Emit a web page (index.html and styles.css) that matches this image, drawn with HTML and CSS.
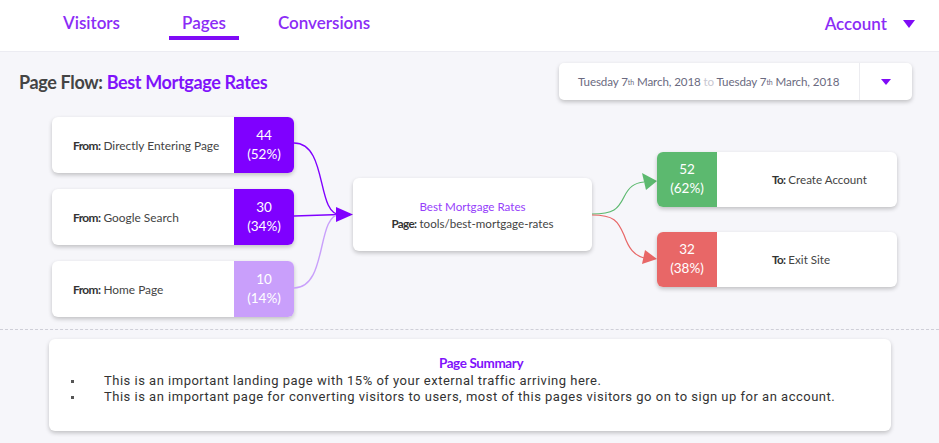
FILE: index.html
```html
<!DOCTYPE html>
<html lang="en">
<head>
<meta charset="utf-8">
<title>Page Flow</title>
<link rel="stylesheet" href="styles.css">
</head>
<body>
<header class="topnav">
  <nav class="tabs">
    <a class="tab">Visitors</a>
    <a class="tab active">Pages</a>
    <a class="tab">Conversions</a>
  </nav>
  <div class="account">Account <span class="caret"></span></div>
</header>
<main class="main">
  <div class="title-row">
    <h1 class="title">Page Flow: <span class="title-accent">Best Mortgage Rates</span></h1>
    <div class="datepicker">
      <div class="date-text">Tuesday 7<sup>th</sup> March, 2018 <span class="to">to</span> Tuesday 7<sup>th</sup> March, 2018</div>
      <div class="date-btn"><span class="caret small"></span></div>
    </div>
  </div>

  <section class="flow">
    <div class="col-left">
      <div class="card src">
        <div class="src-label"><b>From:</b> Directly Entering Page</div>
        <div class="count purple">44<br>(52%)</div>
      </div>
      <div class="card src">
        <div class="src-label"><b>From:</b> Google Search</div>
        <div class="count purple">30<br>(34%)</div>
      </div>
      <div class="card src">
        <div class="src-label"><b>From:</b> Home Page</div>
        <div class="count lilac">10<br>(14%)</div>
      </div>
    </div>

    <svg class="link-in" width="59" height="200" viewBox="0 0 59 200">
      <path d="M0 26 C 34 26, 22 97.5, 46 97.5" fill="none" stroke="#8000ff" stroke-width="1.4"/>
      <path d="M0 99 L 46 97.5" fill="none" stroke="#8000ff" stroke-width="1.4"/>
      <path d="M0 171 C 34 171, 22 97.5, 46 97.5" fill="none" stroke="#c9a0fb" stroke-width="1.4"/>
      <polygon points="42,90 59,97.5 42,105" fill="#8000ff"/>
    </svg>

    <div class="card center">
      <div class="center-name">Best Mortgage Rates</div>
      <div class="center-page"><b>Page:</b> tools/best-mortgage-rates</div>
    </div>

    <svg class="link-out" width="65" height="200" viewBox="0 0 65 200">
      <path d="M0 97 C 22 97, 26 92, 32 80 C 37 70, 42 66, 52 65" fill="none" stroke="#5cb96f" stroke-width="1.2"/>
      <path d="M0 98 C 22 98, 26 104, 32 118 C 37 132, 42 138, 52 141" fill="none" stroke="#e86767" stroke-width="1.2"/>
      <polygon points="50,56 65,64 54,73" fill="#5cb96f"/>
      <polygon points="53,133 65,142 50,147" fill="#e86767"/>
    </svg>

    <div class="col-right">
      <div class="card dest">
        <div class="count green">52<br>(62%)</div>
        <div class="dest-label"><b>To:</b> Create Account</div>
      </div>
      <div class="card dest">
        <div class="count red">32<br>(38%)</div>
        <div class="dest-label"><b>To:</b> Exit Site</div>
      </div>
    </div>
  </section>

  <hr class="divider">

  <section class="card summary">
    <h2 class="summary-title">Page Summary</h2>
    <ul class="summary-list">
      <li>This is an important landing page with 15% of your external traffic arriving here.</li>
      <li>This is an important page for converting visitors to users, most of this pages visitors go on to sign up for an account.</li>
    </ul>
  </section>
</main>
</body>
</html>
```

FILE: styles.css
```css
* { box-sizing: border-box; }
html, body { margin: 0; padding: 0; }
body {
  width: 939px;
  height: 443px;
  overflow: hidden;
  font-family: Lato, "Open Sans", sans-serif;
  background: #f6f6fa;
  color: #444;
}

.topnav {
  height: 52px;
  background: #fff;
  border-bottom: 1px solid #ececf2;
  display: flex;
  align-items: flex-start;
  justify-content: space-between;
  padding: 0 24px 0 50px;
}
.tabs { display: flex; gap: 26px; }
.tab {
  display: block;
  padding: 12px 13px 0;
  height: 40px;
  font-size: 17px;
  font-weight: 600;
  color: #8b2cf6;
  border-bottom: 4px solid transparent;
  line-height: 22px;
}
.tab:first-child { margin-right: 10px; }
.tab.active { border-bottom-color: #7f0bf6; }
.account {
  display: flex;
  align-items: center;
  gap: 16px;
  padding-top: 13px;
  font-size: 17px;
  font-weight: 600;
  color: #8b2cf6;
  line-height: 22px;
}
.caret {
  display: inline-block;
  width: 0; height: 0;
  border-left: 6px solid transparent;
  border-right: 6px solid transparent;
  border-top: 8px solid #7f0bf6;
}
.caret.small {
  border-left-width: 5px;
  border-right-width: 5px;
  border-top-width: 6px;
}

.main { padding: 11px 0 0; }
.title-row {
  display: flex;
  justify-content: space-between;
  align-items: center;
  padding: 0 27px 0 19px;
  height: 37px;
}
.title {
  margin: 0;
  font-size: 18px;
  font-weight: 700;
  letter-spacing: -0.35px;
  color: #444;
}
.title-accent { color: #7f12fb; }

.datepicker {
  width: 353px;
  height: 37px;
  background: #fff;
  border-radius: 5px;
  box-shadow: 0 2px 4px rgba(0,0,0,0.22);
  display: flex;
  align-items: stretch;
}
.date-text {
  flex: 1;
  display: flex;
  align-items: center;
  padding-left: 19px;
  font-size: 11.6px;
  color: #6a6a80;
  letter-spacing: -0.1px;
  white-space: pre;
}
.date-text sup { font-size: 7px; vertical-align: 4px; line-height: 0; }
.date-text .to { color: #c8c8d2; }
.date-btn {
  width: 53px;
  border-left: 1px solid #ececf0;
  display: flex;
  align-items: center;
  justify-content: center;
}

.flow {
  display: flex;
  align-items: center;
  height: 200px;
  margin: 17px 0 0 52px;
}
.card {
  background: #fff;
  border-radius: 6px;
  box-shadow: 0 2px 4px rgba(0,0,0,0.22);
  overflow: hidden;
}
.col-left {
  width: 242px;
  display: flex;
  flex-direction: column;
  gap: 16px;
}
.src {
  height: 56px;
  display: flex;
}
.src-label {
  flex: 1;
  display: flex;
  align-items: center;
  padding-left: 21px;
  font-size: 11.9px;
  color: #444;
  white-space: pre;
}
.src-label b, .dest-label b, .center-page b {
  font-weight: 700;
  letter-spacing: -0.6px;
  color: #333;
}
.count {
  width: 60px;
  display: flex;
  align-items: center;
  justify-content: center;
  text-align: center;
  color: #fff;
  font-size: 13.5px;
  line-height: 19px;
}
.purple { background: #7f00ff; }
.lilac { background: #c99ffb; }
.green { background: #5cb96f; }
.red { background: #e86767; }

.link-in, .link-out { display: block; flex: none; }

.center {
  width: 239px;
  height: 73px;
  margin-top: -5px;
  display: flex;
  flex-direction: column;
  align-items: center;
  justify-content: center;
  gap: 4px;
}
.center-name { color: #9640fb; font-size: 11.6px; }
.center-page { color: #444; font-size: 11.6px; }

.col-right {
  width: 240px;
  display: flex;
  flex-direction: column;
  gap: 25px;
  margin-top: 4px;
}
.dest {
  height: 55px;
  display: flex;
}
.dest-label {
  flex: 1;
  display: flex;
  align-items: center;
  padding-left: 55px;
  font-size: 11.6px;
  color: #444;
  white-space: pre;
}

.divider {
  margin: 12px 0 0;
  border: 0;
  border-top: 1px dashed #cfcfd8;
  height: 0;
}

.summary {
  margin: 9px 48px 0 49px;
  height: 92px;
  padding: 16px 0 0 22px;
}
.summary-title {
  margin: 0 0 2px;
  text-align: center;
  font-size: 13.5px;
  font-weight: 700;
  color: #7f12fb;
  letter-spacing: -0.4px;
}
.summary-list {
  margin: 0;
  padding: 0;
  list-style: none;
  font-family: Roboto, sans-serif;
  font-size: 13px;
  line-height: 16px;
  color: #333;
  letter-spacing: 0.5px;
}
.summary-list li {
  display: flex;
  align-items: center;
}
.summary-list li::before {
  content: "";
  flex: none;
  width: 3px;
  height: 3px;
  background: #555;
  margin-right: 30px;
}
```
